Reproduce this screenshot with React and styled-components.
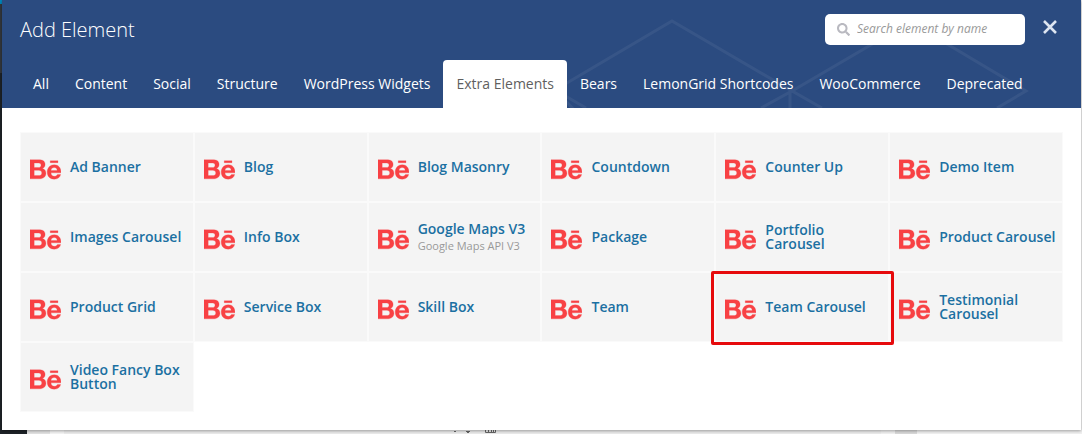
import React, { useState } from "react";
import styled, { createGlobalStyle } from "styled-components";
import { FaBehance, FaSearch } from "react-icons/fa";

const GlobalStyle = createGlobalStyle`
  *, *::before, *::after { box-sizing: border-box; }
  body {
    margin: 0;
    background: #f1f1f1;
    font-family: "Open Sans", "Noto Sans", sans-serif;
  }
`;

const Screen = styled.div`
  position: relative;
  min-height: 100vh;
  padding: 0 1px 4px 2px;
  overflow: hidden;
`;

const Backdrop = styled.div`
  position: absolute;
  inset: 0;
  display: flex;
`;

const AdminMenu = styled.div`
  width: 27px;
  background: linear-gradient(#0085ba 0 4px, #32373c 4px 73px, #1d2227 73px);
`;

const Gutter = styled.div`
  width: ${(p) => p.$width}px;
  background: ${(p) => p.$color};
`;

const EditorArea = styled.div`
  flex: 1;
  display: flex;
  align-items: flex-end;
  padding-left: 388px;
  background: #ebebeb;
`;

const Dialog = styled.section`
  position: relative;
  background: #fff;
  box-shadow: 0 1px 3px rgba(0, 0, 0, 0.35);
`;

const Header = styled.header`
  position: relative;
  background: #2b4b80;
  color: #fff;
`;

const Pattern = styled.svg`
  position: absolute;
  top: 0;
  right: 0;
  width: 541px;
  height: 100%;
  fill: none;
  stroke: #fff;
  stroke-width: 3;
  opacity: 0.055;
`;

const TitleBar = styled.div`
  position: relative;
  display: flex;
  align-items: center;
  height: 60px;
  padding: 0 22px 2px 18px;
`;

const Title = styled.h1`
  flex: 1;
  margin: 0;
  padding-top: 2px;
  font-size: 20px;
  font-weight: 300;
  line-height: 28px;
`;

const SearchBox = styled.label`
  display: flex;
  align-items: center;
  gap: 7px;
  width: 200px;
  height: 31px;
  padding: 0 12px;
  margin-right: 16px;
  border-radius: 5px;
  background: #fff;
  color: #b9b9c0;
  font-size: 13px;
`;

const SearchInput = styled.input`
  flex: 1;
  min-width: 0;
  padding: 0;
  border: 0;
  outline: 0;
  background: transparent;
  color: #555;
  font: italic 12px/18px "Open Sans", "Noto Sans", sans-serif;
  &::placeholder { color: #999; opacity: 1; }
`;

const CloseButton = styled.button`
  display: flex;
  padding: 0 1px 4px;
  border: 0;
  background: none;
  color: #dde5f1;
  cursor: pointer;
`;

const Tabs = styled.nav`
  position: relative;
  display: flex;
  flex-wrap: wrap;
  padding: 0 18px;
`;

const Tab = styled.button`
  height: 48px;
  padding: 0 13px;
  border: 0;
  border-radius: 4px 4px 0 0;
  background: ${(p) => (p.$active ? "#fff" : "transparent")};
  color: ${(p) => (p.$active ? "#5f5f5f" : "#fff")};
  font: 14px/20px "Open Sans", "Noto Sans", sans-serif;
  cursor: pointer;
`;

const Elements = styled.ul`
  display: grid;
  grid-template-columns: repeat(6, 1fr);
  grid-auto-rows: 70px;
  margin: 0;
  padding: 24px 18px 18px;
  list-style: none;
`;

const ElementItem = styled.li`
  position: relative;
  display: flex;
`;

const Highlight = styled.span`
  position: absolute;
  inset: -1px -5px -3px -4px;
  z-index: 1;
  border: 3px solid #e60a0c;
  border-radius: 2px;
  pointer-events: none;
`;

const ElementButton = styled.button`
  flex: 1;
  min-width: 0;
  display: flex;
  align-items: center;
  gap: 9px;
  padding: 0 5px 0 9px;
  border: 1px solid #fafafa;
  background: #f4f4f4;
  color: #1b70a2;
  text-align: left;
  font: 600 14px/14px "Open Sans", "Noto Sans", sans-serif;
  cursor: pointer;
`;

const ElementIcon = styled(FaBehance)`
  flex: none;
  width: 31px;
  height: 31px;
  margin-top: 4px;
  color: #f84144;
  stroke: currentColor;
  stroke-width: 5;
`;

const Description = styled.small`
  display: block;
  padding-top: 3px;
  color: #999;
  font-size: 11px;
  font-weight: 400;
  line-height: 14px;
`;

const TABS = [
  "All", "Content", "Social", "Structure", "WordPress Widgets", "Extra Elements",
  "Bears", "LemonGrid Shortcodes", "WooCommerce", "Deprecated",
];

const ELEMENTS = [
  { name: "Ad Banner" }, { name: "Blog" }, { name: "Blog Masonry" },
  { name: "Countdown" }, { name: "Counter Up" }, { name: "Demo Item" },
  { name: "Images Carousel" }, { name: "Info Box" },
  { name: "Google Maps V3", description: "Google Maps API V3" },
  { name: "Package" }, { name: "Portfolio Carousel" }, { name: "Product Carousel" },
  { name: "Product Grid" }, { name: "Service Box" }, { name: "Skill Box" },
  { name: "Team" }, { name: "Team Carousel", highlighted: true },
  { name: "Testimonial Carousel" }, { name: "Video Fancy Box Button" },
];

export default function App() {
  const [activeTab, setActiveTab] = useState("Extra Elements");

  return (
    <Screen>
      <GlobalStyle />
      <Backdrop aria-hidden="true">
        <AdminMenu />
        <Gutter $width={23} $color="#e2e2e2" />
        <Gutter $width={14} $color="#f4f4f4" />
        <EditorArea>
          <svg width="46" height="12" fill="none" stroke="#666">
            <path d="M2 9.500h2M14 9.500h4M15 10.500h2" />
            <path d="M33.500 2.500h10v8h-10zM36.500 6v4M39.500 6v4M41.500 6v4" />
          </svg>
        </EditorArea>
        <Gutter $width={14} $color="#f1f1f1" />
        <Gutter $width={22} $color="#d9d9d9" />
        <Gutter $width={165} $color="#f1f1f1" />
      </Backdrop>
      <Dialog role="dialog" aria-labelledby="dialog-title">
        <Header>
          <Pattern viewBox="0 0 541 108" preserveAspectRatio="xMaxYMin slice" aria-hidden="true">
            <path d="M46 122 15 90 132 21 252 91 370 22 486 91 457 108" />
            <path d="M15 90 46 108M221 108 252 91 282 108M250 91V108" />
          </Pattern>
          <TitleBar>
            <Title id="dialog-title">Add Element</Title>
            <SearchBox>
              <FaSearch aria-hidden="true" />
              <SearchInput
                type="text"
                aria-label="Search element by name"
                placeholder="Search element by name"
              />
            </SearchBox>
            <CloseButton type="button" aria-label="Close">
              <svg width="16" height="16" fill="none" stroke="currentColor" strokeWidth="2.600">
                <path d="M2 2 14 14M14 2 2 14" />
              </svg>
            </CloseButton>
          </TitleBar>
          <Tabs>
            {TABS.map((tab) => (
              <Tab
                key={tab}
                type="button"
                $active={tab === activeTab}
                onClick={() => setActiveTab(tab)}
              >
                {tab}
              </Tab>
            ))}
          </Tabs>
        </Header>
        <Elements>
          {ELEMENTS.map(({ name, description, highlighted }) => (
            <ElementItem key={name}>
              <ElementButton type="button">
                <ElementIcon aria-hidden="true" />
                <span>
                  {name}
                  {description && <Description>{description}</Description>}
                </span>
              </ElementButton>
              {highlighted && <Highlight />}
            </ElementItem>
          ))}
        </Elements>
      </Dialog>
    </Screen>
  );
}
